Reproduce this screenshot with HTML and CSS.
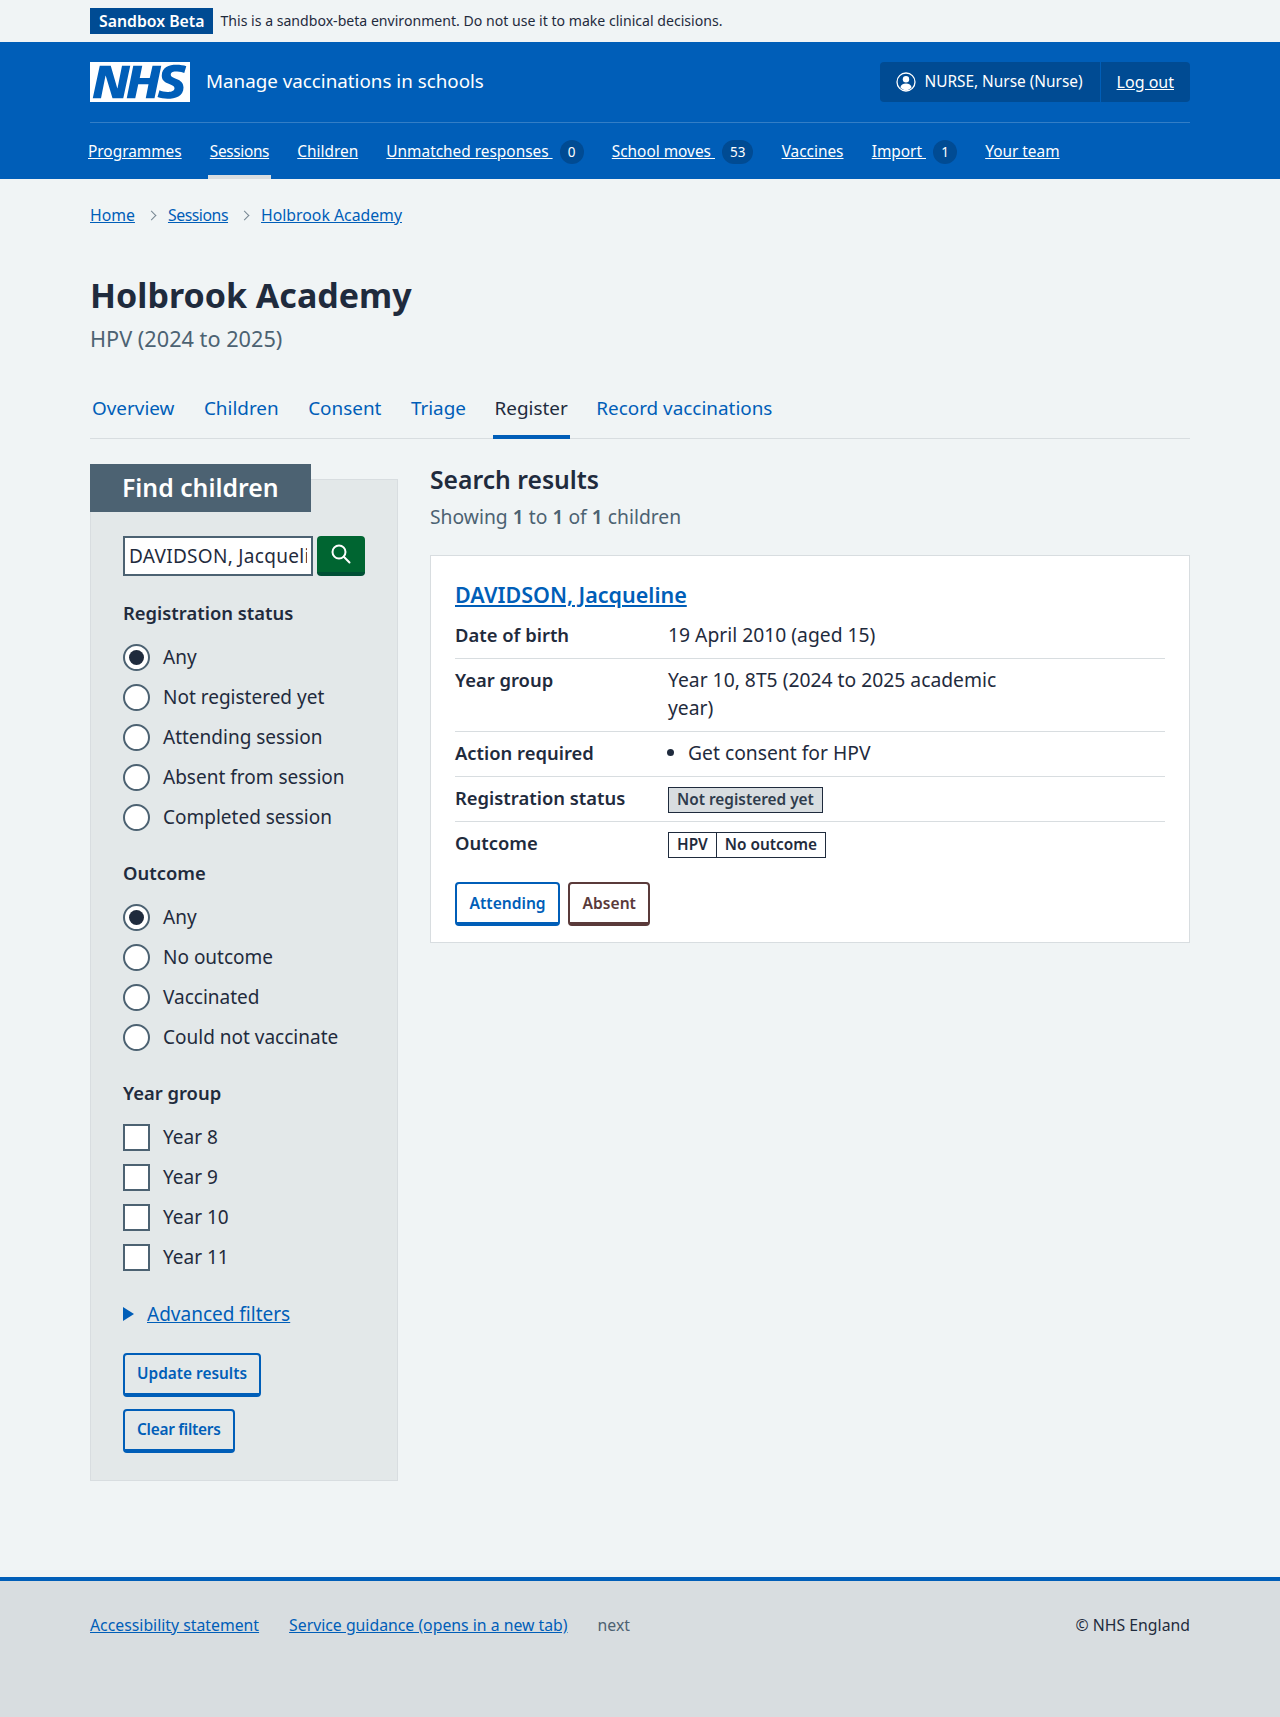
FILE: index.html
```html
<!DOCTYPE html>
<html lang="en">
<head>
    <meta charset="UTF-8">
    <meta name="viewport" content="width=device-width, initial-scale=1.0">
    <title>Register - Holbrook Academy</title>
    <link rel="stylesheet" href="styles.css">
</head>
<body>

<div class="env-bar">
    <div class="wrap env-inner">
        <strong class="env-tag">Sandbox Beta</strong>
        <span class="env-text">This is a sandbox-beta environment. Do not use it to make clinical decisions.</span>
    </div>
</div>

<header class="header">
    <div class="wrap">
        <div class="header-top">
            <svg class="logo" viewBox="0 0 40 16" preserveAspectRatio="none" aria-label="NHS">
                <path fill="#fff" d="M0 0h40v16H0z"/>
                <path fill="#005eb8" d="M3.9 1.5h4.4l2.6 9h.1l1.8-9h3.3l-2.8 13H9l-2.7-9h-.1l-1.8 9H1.1M17.3 1.5h3.6l-1 4.9h4L25 1.5h3.5l-2.7 13h-3.5l1.1-5.6h-4.1l-1.2 5.6h-3.4M37.7 4.4c-.7-.3-1.6-.6-2.9-.6-1.4 0-2.5.2-2.5 1.3 0 1.8 5.1 1.2 5.1 5.1 0 3.6-3.3 4.5-6.4 4.5-1.3 0-2.9-.3-4-.7l.8-2.7c.7.4 2.1.7 3.2.7s2.8-.2 2.8-1.5c0-2.1-5.1-1.3-5.1-5 0-3.4 2.9-4.4 5.8-4.4 1.6 0 3.1.2 4 .6"/>
            </svg>
            <span class="service-name">Manage vaccinations in schools</span>
            <div class="account">
                <div class="account-item account-user">
                    <svg class="account-icon" viewBox="0 0 20 20">
                        <circle cx="10" cy="10" r="9" fill="none" stroke="#fff" stroke-width="1.3"/>
                        <circle cx="10" cy="7.3" r="3.2" fill="#fff"/>
                        <path fill="#fff" d="M4.4 15.6c.4-2.8 2.6-4.2 5.6-4.2s5.2 1.4 5.6 4.2c-1.4 1.6-3.4 2.8-5.6 2.8s-4.2-1.2-5.6-2.8z"/>
                    </svg>
                    NURSE, Nurse (Nurse)
                </div>
                <div class="account-item account-logout"><a href="#">Log out</a></div>
            </div>
        </div>
        <nav class="nav">
            <a class="nav-link" href="#"><span>Programmes</span></a>
            <a class="nav-link nav-current" href="#"><span>Sessions</span></a>
            <a class="nav-link" href="#"><span>Children</span></a>
            <a class="nav-link" href="#"><span>Unmatched responses&nbsp;</span><b class="count">0</b></a>
            <a class="nav-link" href="#"><span>School moves&nbsp;</span><b class="count">53</b></a>
            <a class="nav-link" href="#"><span>Vaccines</span></a>
            <a class="nav-link" href="#"><span>Import&nbsp;</span><b class="count">1</b></a>
            <a class="nav-link" href="#"><span>Your team</span></a>
        </nav>
    </div>
</header>

<div class="wrap">
    <ol class="breadcrumb">
        <li><a href="#">Home</a></li>
        <li><a class="crumb-sessions" href="#">Sessions</a></li>
        <li><a href="#">Holbrook Academy</a></li>
    </ol>

    <main class="main">
        <h1 class="title">Holbrook Academy</h1>
        <p class="caption">HPV (2024 to 2025)</p>

        <nav class="tabs">
            <a class="tab" href="#">Overview</a>
            <a class="tab" href="#">Children</a>
            <a class="tab" href="#">Consent</a>
            <a class="tab" href="#">Triage</a>
            <a class="tab tab-current" href="#">Register</a>
            <a class="tab" href="#">Record vaccinations</a>
        </nav>

        <div class="columns">
            <aside class="filters">
                <h2 class="filters-title">Find children</h2>
                <div class="filters-body">
                    <div class="search">
                        <input class="search-input" type="text" value="DAVIDSON, Jacqueline">
                        <button class="search-btn" type="button" aria-label="Search">
                            <svg viewBox="0 0 20 20" width="20" height="20">
                                <circle cx="8" cy="8" r="6.5" fill="none" stroke="#fff" stroke-width="2"/>
                                <path d="M12.8 12.8l5.7 5.7" fill="none" stroke="#fff" stroke-width="2" stroke-linecap="round"/>
                            </svg>
                        </button>
                    </div>

                    <h3 class="legend">Registration status</h3>
                    <div class="options">
                        <div class="option"><i class="radio radio-on"></i>Any</div>
                        <div class="option"><i class="radio"></i>Not registered yet</div>
                        <div class="option"><i class="radio"></i>Attending session</div>
                        <div class="option"><i class="radio"></i>Absent from session</div>
                        <div class="option"><i class="radio"></i>Completed session</div>
                    </div>

                    <h3 class="legend">Outcome</h3>
                    <div class="options">
                        <div class="option"><i class="radio radio-on"></i>Any</div>
                        <div class="option"><i class="radio"></i>No outcome</div>
                        <div class="option"><i class="radio"></i>Vaccinated</div>
                        <div class="option"><i class="radio"></i>Could not vaccinate</div>
                    </div>

                    <h3 class="legend">Year group</h3>
                    <div class="options">
                        <div class="option"><i class="check"></i>Year 8</div>
                        <div class="option"><i class="check"></i>Year 9</div>
                        <div class="option"><i class="check"></i>Year 10</div>
                        <div class="option"><i class="check"></i>Year 11</div>
                    </div>

                    <div class="details"><i class="details-arrow"></i><a href="#">Advanced filters</a></div>

                    <div class="filter-actions">
                        <a class="btn" href="#">Update results</a>
                        <a class="btn btn-clear" href="#">Clear filters</a>
                    </div>
                </div>
            </aside>

            <section class="results">
                <h2 class="results-title">Search results</h2>
                <p class="results-count">Showing <b>1</b> to <b>1</b> of <b>1</b> children</p>

                <div class="card">
                    <h3 class="card-title"><a href="#">DAVIDSON, Jacqueline</a></h3>
                    <dl class="summary">
                        <div class="row">
                            <dt>Date of birth</dt>
                            <dd>19 April 2010 (aged 15)</dd>
                        </div>
                        <div class="row">
                            <dt>Year group</dt>
                            <dd>Year 10, 8T5 (2024 to 2025 academic year)</dd>
                        </div>
                        <div class="row">
                            <dt>Action required</dt>
                            <dd><ul class="actions"><li>Get consent for HPV</li></ul></dd>
                        </div>
                        <div class="row row-tag">
                            <dt>Registration status</dt>
                            <dd><strong class="tag tag-grey">Not registered yet</strong></dd>
                        </div>
                        <div class="row row-last">
                            <dt>Outcome</dt>
                            <dd><strong class="tag">HPV</strong><strong class="tag tag-join">No outcome</strong></dd>
                        </div>
                    </dl>
                    <div class="card-actions">
                        <a class="btn btn-white" href="#">Attending</a>
                        <a class="btn btn-brown" href="#">Absent</a>
                    </div>
                </div>
            </section>
        </div>
    </main>
</div>

<footer class="footer">
    <div class="wrap footer-inner">
        <a href="#">Accessibility statement</a>
        <a href="#">Service guidance (opens in a new tab)</a>
        <span class="footer-muted">next</span>
        <span class="footer-copy">© NHS England</span>
    </div>
</footer>

</body>
</html>
```

FILE: styles.css
```css
/* Page */

* {
    box-sizing: border-box;
}
body {
    font-family: "Noto Sans", Arial, sans-serif;
    font-size: 19px;
    line-height: 28px;
    color: #1f2b3d;
    background-color: #f0f4f5;
    margin: 0;
}
a {
    color: #005eb8;
}
.wrap {
    width: 1100px;
    margin: 0 auto;
}

/* Environment bar */

.env-bar {
    height: 42px;
}
.env-inner {
    display: flex;
    align-items: center;
    height: 42px;
    gap: 7px;
}
.env-tag {
    background-color: #004b93;
    color: #fff;
    font-size: 15.8px;
    font-weight: 600;
    line-height: 26px;
    padding: 0 9px;
}
.env-text {
    font-size: 14.1px;
}

/* Header */

.header {
    background-color: #005eb8;
    color: #fff;
    height: 137px;
}
.header a {
    color: #fff;
}
.header-top {
    display: flex;
    align-items: center;
    height: 81px;
    border-bottom: 1px solid #337ec6;
}
.logo {
    width: 100px;
    height: 40px;
    margin-right: 16px;
}
.service-name {
    font-size: 18.8px;
    margin-bottom: 2px;
}
.account {
    display: flex;
    margin-left: auto;
    height: 40px;
    gap: 1px;
}
.account-item {
    display: flex;
    align-items: center;
    background-color: #004b93;
    font-size: 15.4px;
}
.account-user {
    padding: 0 17px 0 16px;
    border-radius: 4px 0 0 4px;
}
.account-logout {
    padding: 0 16px;
    font-size: 16px;
    border-radius: 0 4px 4px 0;
}
.account-icon {
    width: 20px;
    height: 20px;
    margin-right: 8px;
}
.nav {
    display: flex;
    gap: 24.2px;
    margin-left: -4px;
    height: 56px;
}
.nav-link {
    display: flex;
    align-items: center;
    font-size: 15.4px;
    padding: 2px 2px 0;
    height: 56px;
    border-top: 4px solid transparent;
    border-bottom: 4px solid transparent;
    text-decoration: none;
}
.nav-link span {
    text-decoration: underline;
}
.nav-current {
    border-bottom-color: #d8dde0;
    letter-spacing: -.35px;
}
.count {
    background-color: #004b93;
    border-radius: 12px;
    font-size: 13.5px;
    font-weight: 400;
    line-height: 24px;
    min-width: 24px;
    padding: 0 8px;
    margin-left: 7px;
    text-align: center;
}

/* Breadcrumb */

.breadcrumb {
    display: flex;
    list-style: none;
    margin: 0;
    padding: 24px 0 0;
    font-size: 15.8px;
    line-height: 24px;
}
.breadcrumb li + li::before {
    content: "";
    display: inline-block;
    width: 6px;
    height: 6px;
    border-top: 1px solid #768692;
    border-right: 1px solid #768692;
    transform: rotate(45deg);
    margin: 0 13px 2px 13px;
}
.crumb-sessions {
    letter-spacing: -.45px;
}

/* Title */

.main {
    padding-top: 46px;
}
.title {
    font-size: 34px;
    font-weight: 700;
    line-height: 44px;
    margin: 0;
}
.caption {
    font-size: 21.7px;
    line-height: 30px;
    color: #4c6272;
    margin: 7px 0 0;
}

/* Secondary nav */

.tabs {
    display: flex;
    gap: 25.5px;
    border-bottom: 1px solid #d8dde0;
    margin-top: 30px;
    height: 55px;
}
.tab {
    display: flex;
    align-items: center;
    padding: 0 2px 3px;
    height: 55px;
    font-size: 18.9px;
    text-decoration: none;
    border-bottom: 4px solid transparent;
}
.tab-current {
    color: #1f2b3d;
    border-bottom-color: #005eb8;
    margin: 0 -1px 0 -1px;
}

/* Columns */

.columns {
    display: flex;
    gap: 32px;
    margin-top: 25px;
}

/* Filters */

.filters {
    width: 308px;
    flex: none;
}
.filters-title {
    position: relative;
    display: inline-block;
    width: 221px;
    height: 48px;
    background-color: #4c6272;
    color: #fff;
    font-size: 24.8px;
    font-weight: 600;
    line-height: 46px;
    margin: 0;
    padding-left: 32px;
    vertical-align: top;
}
.filters-body {
    background-color: #e3e8e9;
    border: 1px solid #d8dde0;
    margin-top: -33px;
    padding: 56px 32px 28px;
    height: 1002px;
}
.search {
    display: flex;
    gap: 4px;
    height: 40px;
}
.search-input {
    width: 190px;
    height: 40px;
    background-color: #fff;
    color: #1f2b3d;
    border: 2px solid #4c6272;
    border-radius: 0;
    padding: 0 4px;
    font-family: inherit;
    font-size: 19px;
    letter-spacing: .3px;
}
.search-btn {
    width: 48px;
    height: 40px;
    padding: 0;
    background-color: #006531;
    border: 0;
    border-bottom: 4px solid #004f35;
    border-radius: 4px;
    display: flex;
    align-items: center;
    justify-content: center;
}
.legend {
    font-size: 18.4px;
    font-weight: 600;
    line-height: 28px;
    margin: 23px 0 0;
}
.options + .legend {
    margin-top: 22px;
}
.options {
    margin-top: 10px;
}
.option {
    display: flex;
    align-items: center;
    height: 40px;
}
.radio,
.check {
    flex: none;
    width: 27px;
    height: 27px;
    margin-right: 13px;
    background-color: #fff;
    border: 2px solid #4c6272;
}
.radio {
    border-radius: 50%;
    display: flex;
    align-items: center;
    justify-content: center;
}
.radio-on::after {
    content: "";
    width: 15px;
    height: 15px;
    border-radius: 50%;
    background-color: #1f2b3d;
}
.details {
    display: flex;
    align-items: center;
    margin-top: 23px;
    height: 28px;
}
.details-arrow {
    width: 0;
    height: 0;
    border-left: 11px solid #005eb8;
    border-top: 7px solid transparent;
    border-bottom: 7px solid transparent;
    margin-right: 13px;
}
.filter-actions {
    display: flex;
    flex-direction: column;
    align-items: flex-start;
    gap: 12px;
    margin-top: 25px;
}
.filter-actions .btn {
    padding: 0 12px;
}

/* Buttons */

.btn {
    display: inline-block;
    height: 44px;
    border: 2px solid #005eb8;
    border-bottom-width: 4px;
    border-radius: 4px;
    padding: 0 12.5px;
    font-size: 15.4px;
    font-weight: 600;
    line-height: 38px;
    text-decoration: none;
}
.btn-clear {
    letter-spacing: -.25px;
}
.btn-white {
    background-color: #fff;
    font-size: 15.6px;
}
.btn-brown {
    background-color: #fff;
    font-size: 15.6px;
    color: #5a3a3a;
    border-color: #5a3a3a;
}

/* Results */

.results {
    flex: 1;
    padding-top: 1px;
}
.results-title {
    font-size: 24.7px;
    font-weight: 600;
    line-height: 30px;
    margin: 0;
}
.results-count {
    font-size: 19.3px;
    color: #4c6272;
    margin: 8px 0 0;
}
.results-count b {
    font-weight: 600;
}
.card {
    background-color: #fff;
    border: 1px solid #d8dde0;
    margin-top: 24px;
    padding: 24px;
    height: 388px;
}
.card-title {
    font-size: 21.5px;
    font-weight: 600;
    line-height: 30px;
    margin: 0 0 4px;
}
.summary {
    margin: 0;
}
.row {
    display: flex;
    border-bottom: 1px solid #d8dde0;
    padding: 7px 0 9px;
}
.row-tag {
    padding-bottom: 8px;
}
.row-last {
    border-bottom: 0;
}
.row dt {
    width: 213px;
    flex: none;
    font-size: 18.4px;
    font-weight: 600;
}
.row dd {
    margin: 0;
    width: 330px;
    font-size: 19.3px;
}
.actions {
    margin: 0;
    padding-left: 20px;
}
.tag {
    display: inline-block;
    font-size: 15.4px;
    font-weight: 600;
    line-height: 24px;
    border: 1px solid #1f2b3d;
    padding: 0 8px;
}
.tag-grey {
    background-color: #d8dde0;
    color: #2f3c4c;
}
.tag-join {
    border-left: 0;
}
.card-actions {
    display: flex;
    gap: 8px;
    margin-top: 15px;
}

/* Footer */

.footer {
    margin-top: 96px;
    height: 140px;
    background-color: #d8dde0;
    border-top: 4px solid #005eb8;
    font-size: 15.8px;
}
.footer-inner {
    display: flex;
    gap: 30px;
    padding-top: 32px;
    line-height: 24px;
}
.footer-muted {
    color: #4c6272;
}
.footer-copy {
    margin-left: auto;
}
```
